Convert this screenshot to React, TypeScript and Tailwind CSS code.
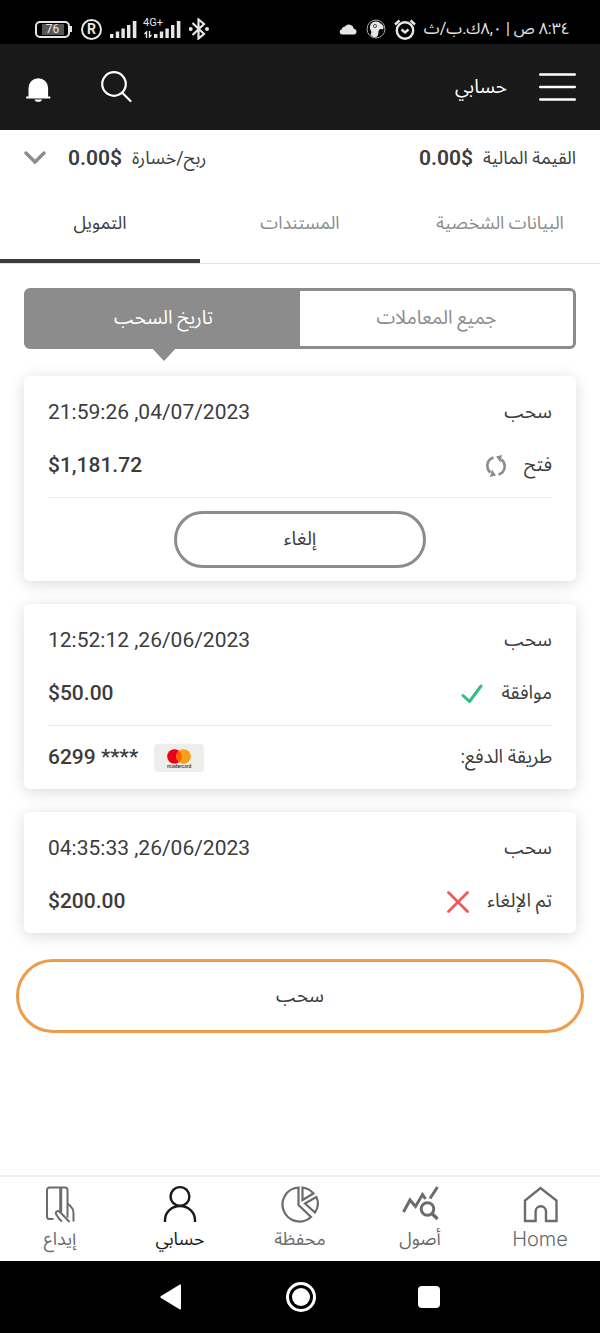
import type { ReactNode } from 'react';

type Status = 'open' | 'approved' | 'cancelled';

interface Transaction {
  id: number;
  date: string;
  amount: string;
  label: string;
  status: Status;
  card?: string;
}

const transactions: Transaction[] = [
  { id: 1, date: '21:59:26 ,04/07/2023', amount: '$1,181.72', label: 'فتح', status: 'open' },
  { id: 2, date: '12:52:12 ,26/06/2023', amount: '$50.00', label: 'موافقة', status: 'approved', card: '6299 ****' },
  { id: 3, date: '04:35:33 ,26/06/2023', amount: '$200.00', label: 'تم الإلغاء', status: 'cancelled' },
];

function Signal() {
  return (
    <svg width="27" height="17" viewBox="0 0 27 17" fill="currentColor">
      <rect x="0" y="13" width="3.4" height="4" />
      <rect x="5.8" y="10.5" width="3.4" height="6.5" />
      <rect x="11.4" y="7.5" width="3.4" height="9.5" />
      <rect x="17" y="4" width="3.4" height="13" />
      <rect x="22.8" y="0" width="3.6" height="17" />
    </svg>
  );
}

function StatusBar() {
  return (
    <div dir="ltr" className="flex h-11 items-end justify-between bg-black pr-[30px] pb-[3px] pl-[35px] text-[#e6e6e6]">
      <div className="flex h-6 items-center">
        <div className="flex h-[17px] w-[35px] items-center justify-center rounded-[5px] border-2 border-current">
          <span className="w-[22px] bg-[#555] text-center text-xs leading-[11px]">76</span>
        </div>
        <div className="h-[6px] w-[2px] bg-current" />
        <div className="ml-[9px] flex size-[21px] items-center justify-center rounded-full border-2 border-current text-sm leading-none font-bold">
          R
        </div>
        <div className="ml-2">
          <Signal />
        </div>
        <div className="relative ml-[17px]">
          <Signal />
          <span className="absolute -top-[3px] -left-[11px] text-[11px] leading-[10px]">4G+</span>
          <svg className="absolute bottom-0 -left-[10px]" width="8" height="7" viewBox="0 0 8 7" fill="none" stroke="currentColor" strokeWidth="1.4">
            <path d="M2.5 7V1L.5 3M5.5 0v6l2-2" />
          </svg>
        </div>
        <svg className="ml-2" width="20" height="22" viewBox="0 0 20 22" fill="none" stroke="currentColor" strokeWidth="2.2">
          <path d="M3.5 5 15 16l-5.5 4.5v-19L15 6 3.5 17" />
          <circle cx="1.7" cy="11" r=".9" fill="currentColor" />
          <circle cx="18" cy="11" r=".9" fill="currentColor" />
        </svg>
      </div>
      <div className="flex h-6 items-center gap-2">
        <svg width="19" height="12" viewBox="0 0 19 12" fill="currentColor">
          <path d="M3 11.5a2.7 2.7 0 0 1-.3-5.3A3.500 3.500 0 0 1 6 3.500a5 5 0 0 1 8.800 2.200 3 3 0 0 1 .8 5.800z" />
        </svg>
        <svg width="20" height="20" viewBox="0 0 20 20">
          <circle cx="10" cy="10" r="9" fill="none" stroke="#a8a8a8" strokeWidth="1" />
          <path d="M4 10C3.500 5 6.500 2.200 10 2.500c3 0 4 1.500 6 3 2 1.500 2 3.500.8 5-1.500-1-3.300-.5-4 1-.8 2 .2 4.500-2.300 6.500-3 .8-5.500-1-6-3 1.500-1 1-2.500-.5-5z" fill="currentColor" />
          <circle cx="9" cy="7" r="1.6" fill="none" stroke="#333" strokeWidth=".8" />
        </svg>
        <svg width="22" height="21" viewBox="0 0 22 21" fill="none" stroke="currentColor" strokeWidth="2.4">
          <circle cx="11" cy="11.5" r="8.2" />
          <path d="m7.500 10.500 3.500 3 3.500-3M1 5.500 5.500 1.500M21 5.500l-4.500-4" />
        </svg>
        <span dir="rtl" className="text-base leading-6">٨:٣٤ ص | ٨,٠ك.ب/ث</span>
      </div>
    </div>
  );
}

function Header() {
  return (
    <header className="flex h-[86px] items-center justify-between bg-[#191919] px-6 text-white">
      <div className="flex items-center gap-8">
        <button type="button" aria-label="القائمة">
          <svg width="37" height="30" viewBox="0 0 37 30" stroke="currentColor" strokeWidth="2.4" strokeLinecap="round">
            <path d="M1.200 2.500h34.600M1.200 15h34.600M1.200 27.500h34.600" />
          </svg>
        </button>
        <h1 className="text-[19px]">حسابي</h1>
      </div>
      <div className="flex items-center gap-12">
        <button type="button" aria-label="بحث">
          <svg width="32" height="32" viewBox="0 0 32 32" fill="none" stroke="currentColor" strokeWidth="2.2" strokeLinecap="round">
            <circle cx="14" cy="13" r="11.8" />
            <path d="m22.500 22 8 8" />
          </svg>
        </button>
        <button type="button" aria-label="الإشعارات">
          <svg width="28" height="32" viewBox="0 0 28 32" fill="currentColor">
            <path d="M4.500 25.500V17a9.800 9.800 0 0 1 19.600 0v8.500h2.200v2H2.200v-2zM10.500 28.500h7.500a3.800 2.800 0 0 1-7.500 0z" />
          </svg>
        </button>
      </div>
    </header>
  );
}

function StatusIcon({ status }: { status: Status }) {
  if (status === 'open') {
    return (
      <svg width="20" height="22" viewBox="0 0 20 22" fill="none" stroke="#8c8c8c" strokeWidth="2.6">
        <path d="M7.500 2.500C0 5-.2 13.500 4.500 17.500M12.500 19.500c7.500-2.500 7.700-11 3-15" />
        <path d="m10 20.500-6 1.500 2-7.500zM10 1.500 16 0l-1.500 7.500z" fill="#8c8c8c" stroke="none" />
      </svg>
    );
  }
  if (status === 'approved') {
    return (
      <svg width="22" height="20" viewBox="0 0 22 20" fill="none" stroke="#2ac27e" strokeWidth="3" strokeLinecap="round" strokeLinejoin="round">
        <path d="m2 11.500 6.500 6L20 2" />
      </svg>
    );
  }
  return (
    <svg width="22" height="22" viewBox="0 0 22 22" fill="none" stroke="#ec5b5b" strokeWidth="2.8" strokeLinecap="round">
      <path d="m1.500 1.500 19 19M20.500 1.500l-19 19" />
    </svg>
  );
}

function Mastercard() {
  return (
    <div className="flex h-7 w-[50px] flex-col items-center rounded bg-[#ededea] pt-[5px]">
      <svg width="24" height="15" viewBox="0 0 24 15">
        <circle cx="7.5" cy="7.5" r="7.3" fill="#eb001b" />
        <circle cx="16.5" cy="7.5" r="7.3" fill="#f79e1b" />
        <path d="M12 1.700a7.300 7.300 0 0 1 0 11.600 7.300 7.300 0 0 1 0-11.600z" fill="#ff5f00" />
      </svg>
      <span className="font-[Lato] text-[5px] leading-[5px] text-black">mastercard</span>
    </div>
  );
}

function TransactionCard({ item }: { item: Transaction }) {
  return (
    <li className="rounded-md bg-white px-6 pt-[10px] shadow-[0_3px_16px_rgba(0,0,0,0.15)]">
      <div className="flex h-[53px] items-center justify-between">
        <span>سحب</span>
        <time dir="ltr" className="text-[21px]">{item.date}</time>
      </div>
      <div className="mb-[5px] flex h-[53px] items-center justify-between">
        <div className="flex items-center gap-[18px]">
          <span>{item.label}</span>
          <StatusIcon status={item.status} />
        </div>
        <span dir="ltr" className="text-[21px] font-medium">{item.amount}</span>
      </div>
      {item.status === 'open' && (
        <div className="flex justify-center border-t border-[#ebebeb] py-[13px]">
          <button type="button" className="h-[57px] w-1/2 rounded-full border-3 border-[#8c8c8c]">
            إلغاء
          </button>
        </div>
      )}
      {item.card && (
        <div className="flex h-16 items-center justify-between border-t border-[#ebebeb]">
          <span>طريقة الدفع:</span>
          <div className="flex items-center gap-4">
            <Mastercard />
            <span dir="ltr" className="text-[21px] font-medium">{item.card}</span>
          </div>
        </div>
      )}
    </li>
  );
}

function NavItem({ label, active, children }: { label: ReactNode; active?: boolean; children: ReactNode }) {
  return (
    <a href="#" className={`flex flex-1 flex-col items-center pt-2 ${active ? 'text-[#1a1a1a]' : 'text-[#6b6b6b]'}`}>
      <svg width="40" height="40" viewBox="0 0 40 40" fill="none" stroke="currentColor" strokeWidth="2.4">
        {children}
      </svg>
      <span className="leading-7">{label}</span>
    </a>
  );
}

function BottomNav() {
  return (
    <nav className="flex h-[86px] border-t-2 border-[#f0f0f0] bg-white text-lg">
      <NavItem label={<span className="font-[Inter] text-xl leading-7 font-light">Home</span>}>
        <path d="M5 36V15.500L20.500 3 36.500 15.500V36H26V26.500a5.200 5.200 0 0 0-10.400 0V36z" />
      </NavItem>
      <NavItem label="أصول">
        <path d="m3.500 27 6.500-12 5.500 6.500 7-12 3 4.500M30 13.500 37.500 2" strokeWidth="3" />
        <circle cx="27.5" cy="24" r="6.3" strokeWidth="3" />
        <path d="m32 28.500 5.500 5.500" strokeWidth="3.4" />
      </NavItem>
      <NavItem label="محفظة">
        <path d="M18.500 2.500a17 17 0 1 0 12.500 29.500L18.500 20z" strokeWidth="2.2" />
        <path d="M22.500 2.500A18 18 0 0 1 33.500 8.500L22.500 15zM36.300 12C39 17.500 38 23 35 27.500L25 18.500z" strokeWidth="2.2" />
      </NavItem>
      <NavItem label="حسابي" active>
        <circle cx="20" cy="11.5" r="9.4" />
        <path d="M5 37v-2a15 14 0 0 1 30 0v2" />
      </NavItem>
      <NavItem label="إيداع">
        <path d="M13.500 34H9.500a2.500 2.500 0 0 1-2.500-2.500V5a2.500 2.500 0 0 1 2.500-2.500h15.500a2.500 2.500 0 0 1 2.500 2.500v27.500" strokeWidth="2" />
        <path d="M20.700 3v24" strokeWidth="3" />
        <path d="M22 36.500c-3-2-4.500-5-6-7.500-.8-2.500 2-4 4-2l9.500 10M27.500 18.500c4 3 6 5.500 6 9.500v8.500" strokeWidth="2" />
      </NavItem>
    </nav>
  );
}

export default function App() {
  return (
    <div dir="rtl" className="flex min-h-screen flex-col bg-white font-[Roboto,'Noto_Sans_Arabic','DejaVu_Sans',sans-serif] text-[19px] text-[#3c3c3c]">
      <StatusBar />
      <Header />

      <main className="flex-1">
        <div className="flex h-14 items-center justify-between px-6 text-lg">
          <div className="flex items-center gap-[10px]">
            <span>القيمة المالية</span>
            <strong dir="ltr" className="text-[21px] font-semibold">0.00$</strong>
          </div>
          <div className="flex items-center gap-[10px]">
            <span>ربح/خسارة</span>
            <strong dir="ltr" className="text-[21px] font-semibold">0.00$</strong>
            <button type="button" aria-label="عرض التفاصيل" className="ms-3">
              <svg width="22" height="14" viewBox="0 0 22 14" fill="none" stroke="#8c8c8c" strokeWidth="3.4" strokeLinecap="round">
                <path d="m2 2 9 9 9-9" />
              </svg>
            </button>
          </div>
        </div>

        <div role="tablist" className="flex h-[78px] border-b border-[#e2e2e2] text-lg text-[#8c8c8c]">
          <button type="button" role="tab" aria-selected="false" className="flex-1 border-b-4 border-transparent">البيانات الشخصية</button>
          <button type="button" role="tab" aria-selected="false" className="flex-1 border-b-4 border-transparent">المستندات</button>
          <button type="button" role="tab" aria-selected="true" className="flex-1 border-b-4 border-[#3c3c3c] text-[#3c3c3c]">التمويل</button>
        </div>

        <div className="mx-6 mt-6 flex h-[61px] rounded-md border-3 border-[#8c8c8c]">
          <button type="button" className="flex-1 text-[#8c8c8c]">جميع المعاملات</button>
          <button type="button" className="relative flex-1 bg-[#8c8c8c] text-white">
            تاريخ السحب
            <span className="absolute top-full left-1/2 -translate-x-1/2 border-x-[14px] border-t-[15px] border-x-transparent border-t-[#8c8c8c]" />
          </button>
        </div>

        <ul className="mx-6 mt-[27px] flex flex-col gap-[23px]">
          {transactions.map((item) => (
            <TransactionCard key={item.id} item={item} />
          ))}
        </ul>

        <div className="px-4 pt-[26px]">
          <button type="button" className="h-[74px] w-full rounded-full border-3 border-[#ee9c4a] bg-white">
            سحب
          </button>
        </div>
      </main>

      <BottomNav />
      <div dir="ltr" className="flex h-[72px] items-center justify-center gap-[102px] bg-black text-white">
        <button type="button" aria-label="رجوع">
          <svg width="24" height="26" viewBox="0 0 24 26" fill="currentColor">
            <path d="M1 12 19.500.8c1-.5 1.500 0 1.500 1v22.500c0 1-.5 1.500-1.500 1L1 14c-.9-.6-.9-1.400 0-2z" />
          </svg>
        </button>
        <button type="button" aria-label="الشاشة الرئيسية" className="flex size-[30px] items-center justify-center rounded-full border-3 border-white">
          <span className="size-[18px] rounded-full bg-white" />
        </button>
        <button type="button" aria-label="التطبيقات الأخيرة" className="size-[22px] rounded-[4px] bg-white" />
      </div>
    </div>
  );
}
